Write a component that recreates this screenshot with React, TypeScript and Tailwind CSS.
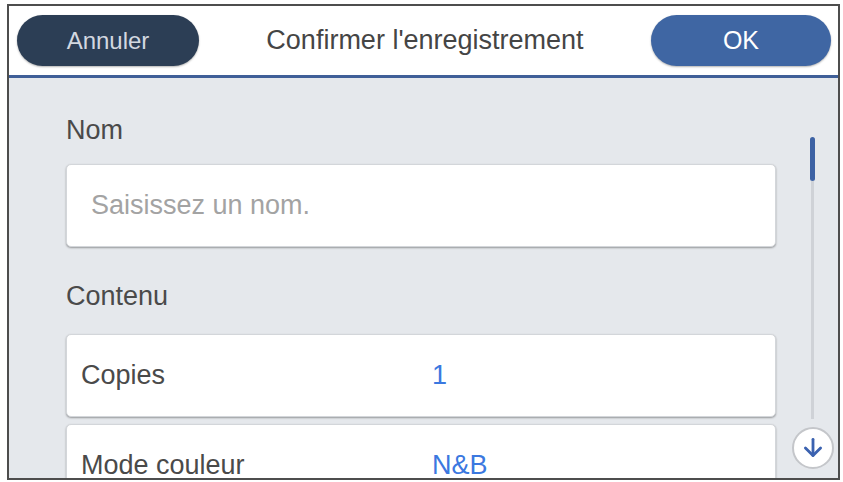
export default function App() {
  return (
    <div className="w-[843px] h-[482px] bg-white pl-[7px] pt-[4px] font-['Liberation_Sans',Arial,sans-serif]">
      <div className="w-[833px] h-[476px] border-2 border-[#4d4d4d] flex flex-col overflow-hidden">
        {/* Header */}
        <div className="h-[72px] shrink-0 bg-white flex items-center justify-between pl-[8px] pr-[7px] border-b-[3px] border-[#3f5f98]">
          <button className="w-[182px] h-[51px] rounded-full bg-[#2c3e55] text-[#d3d8e0] text-[24px] shadow-[0_1px_2px_rgba(0,0,0,0.3)]">
            Annuler
          </button>
          <span className="text-[27px] text-[#454545]">
            Confirmer l'enregistrement
          </span>
          <button className="w-[180px] h-[51px] rounded-full bg-[#3f66a3] text-white text-[25px] shadow-[0_1px_2px_rgba(0,0,0,0.3)]">
            OK
          </button>
        </div>

        {/* Body */}
        <div className="flex-1 bg-[#e5e8ec] flex">
          <div className="pl-[57px] pt-[36px] w-[770px]">
            <p className="text-[27px] leading-[32px] text-[#4a4a4a]">Nom</p>
            <div className="mt-[18px] w-[710px] h-[83px] bg-white rounded-[5px] border border-[#d3d6da] shadow-[0_1px_2px_rgba(0,0,0,0.35)] flex items-center pl-[24px]">
              <span className="text-[27px] text-[#a3a3a3]">Saisissez un nom.</span>
            </div>
            <p className="mt-[33px] text-[27px] leading-[32px] text-[#4a4a4a]">Contenu</p>
            <div className="mt-[22px] flex flex-col gap-[7px]">
              {[
                { label: "Copies", value: "1" },
                { label: "Mode couleur", value: "N&B" },
              ].map((row) => (
                <div
                  key={row.label}
                  className="w-[710px] h-[83px] shrink-0 bg-white rounded-[5px] border border-[#d3d6da] shadow-[0_1px_2px_rgba(0,0,0,0.35)] flex items-center pl-[14px]"
                >
                  <span className="w-[351px] shrink-0 text-[27px] text-[#4a4a4a]">{row.label}</span>
                  <span className="text-[27px] text-[#3b78e0]">{row.value}</span>
                </div>
              ))}
            </div>
          </div>

          {/* Scrollbar */}
          <div className="flex-1 flex flex-col items-center pt-[59px] pl-[8px]">
            <div className="w-[5px] h-[44px] shrink-0 rounded-full bg-[#3d62a4]" />
            <div className="w-[3px] h-[238px] shrink-0 bg-[#cfd2d7]" />
            <div className="mt-[8px] w-[42px] h-[42px] shrink-0 rounded-full bg-white border-2 border-[#c4c6ca] flex items-center justify-center">
              <svg width="26" height="26" viewBox="0 0 24 24" fill="none" stroke="#3b62b0" strokeWidth="2.6" strokeLinecap="round" strokeLinejoin="round">
                <path d="M12 4v15" />
                <path d="M5 12l7 7 7-7" />
              </svg>
            </div>
          </div>
        </div>
      </div>
    </div>
  );
}
